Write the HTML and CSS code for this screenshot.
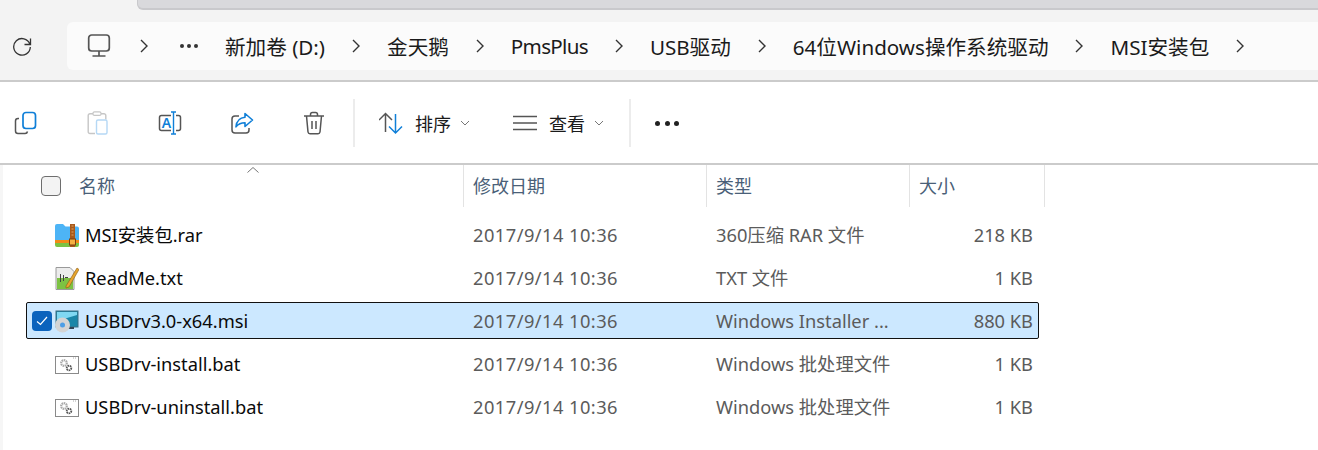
FILE: index.html

```html
<!DOCTYPE html>
<html lang="zh-CN">
<head>
  <meta charset="UTF-8" />
  <title>MSI安装包</title>
  <link rel="stylesheet" href="styles.css">
</head>
<body>
  <div class="top">
    <div class="tabstrip"><div class="tab"></div></div>
    <div class="navbar">
      <svg class="refresh" width="20" height="20" viewBox="0 0 20 20"><path d="M18.500 2.500v6h-6M17.800 8A8.300 8.300 0 1 0 18.300 11" fill="none" stroke="#333" stroke-width="1.300"/></svg>
      <div class="crumbs">
        <svg class="pc" width="24" height="24" viewBox="0 0 24 24"><rect x="1.700" y="1" width="20.600" height="16" rx="3" fill="none" stroke="#555" stroke-width="1.700"/><path d="M12 17v5M5.500 22h13" stroke="#555" stroke-width="1.700"/></svg>
        <svg class="chev" width="8" height="14" viewBox="0 0 8 14"><path d="M1 1l6 6-6 6" fill="none" stroke="#333" stroke-width="1.400"/></svg>
        <div class="more"><i></i><i></i><i></i></div>
        <span>新加卷 (D:)</span>
        <svg class="chev" width="8" height="14" viewBox="0 0 8 14"><path d="M1 1l6 6-6 6" fill="none" stroke="#333" stroke-width="1.400"/></svg>
        <span>金天鹅</span>
        <svg class="chev" width="8" height="14" viewBox="0 0 8 14"><path d="M1 1l6 6-6 6" fill="none" stroke="#333" stroke-width="1.400"/></svg>
        <span class="latin">PmsPlus</span>
        <svg class="chev" width="8" height="14" viewBox="0 0 8 14"><path d="M1 1l6 6-6 6" fill="none" stroke="#333" stroke-width="1.400"/></svg>
        <span>USB驱动</span>
        <svg class="chev" width="8" height="14" viewBox="0 0 8 14"><path d="M1 1l6 6-6 6" fill="none" stroke="#333" stroke-width="1.400"/></svg>
        <span>64位Windows操作系统驱动</span>
        <svg class="chev" width="8" height="14" viewBox="0 0 8 14"><path d="M1 1l6 6-6 6" fill="none" stroke="#333" stroke-width="1.400"/></svg>
        <span>MSI安装包</span>
        <svg class="chev" width="8" height="14" viewBox="0 0 8 14"><path d="M1 1l6 6-6 6" fill="none" stroke="#333" stroke-width="1.400"/></svg>
      </div>
    </div>
  </div>

  <div class="toolbar">
    <div class="tools">
      <!-- copy -->
      <svg width="24" height="24" viewBox="0 0 24 24" fill="none"><path d="M5 7.500H4a2.500 2.500 0 0 0-2.500 2.500v10A2.500 2.500 0 0 0 4 22.500h7a2.500 2.500 0 0 0 2.500-2" stroke="#555" stroke-width="1.500"/><rect x="9" y="1.500" width="12.500" height="16" rx="3" stroke="#0f7fd8" stroke-width="1.700"/></svg>
      <!-- paste -->
      <svg width="24" height="24" viewBox="0 0 24 24" fill="none"><path d="M9 22.500H4a1.800 1.800 0 0 1-1.800-1.800V4.500A1.800 1.800 0 0 1 4 2.700h14a1.800 1.800 0 0 1 1.800 1.800v4" stroke="#c6c6c6" stroke-width="1.400"/><rect x="7" y=".8" width="8" height="3.600" rx="1.500" fill="#fff" stroke="#c6c6c6" stroke-width="1.200"/><rect x="10.500" y="9" width="10.500" height="14" rx="1.500" stroke="#b5d8f5" stroke-width="1.400"/></svg>
      <!-- rename -->
      <svg width="24" height="24" viewBox="0 0 24 24" fill="none"><path d="M13 4.500H3.500a2 2 0 0 0-2 2v11a2 2 0 0 0 2 2H13M18 4.500h2.500a2 2 0 0 1 2 2v11a2 2 0 0 1-2 2H18" stroke="#555" stroke-width="1.500"/><path d="M13 1h5M15.500 1v22M13 23h5" stroke="#0f7fd8" stroke-width="1.400"/><text x="8.500" y="17" class="glyph">A</text></svg>
      <!-- share -->
      <svg width="24" height="24" viewBox="0 0 24 24" fill="none"><path d="M9 5H5a3 3 0 0 0-3 3v11a3 3 0 0 0 3 3h11a3 3 0 0 0 3-3v-2" stroke="#555" stroke-width="1.500"/><path d="M15 2.500l7.500 6.500-7.500 6.500v-3.700c-4 0-6.500 1-9 4 .5-5 3.500-9 9-9.500z" stroke="#0f7fd8" stroke-width="1.600" stroke-linejoin="round"/></svg>
      <!-- delete -->
      <svg width="24" height="24" viewBox="0 0 24 24" fill="none"><path d="M2 5h20M8.500 5V3.500A2 2 0 0 1 10.500 1.500h3a2 2 0 0 1 2 2V5M4.500 5l1.500 16a2 2 0 0 0 2 1.700h8a2 2 0 0 0 2-1.700L19.500 5M10 10v8M14 10v8" stroke="#555" stroke-width="1.500"/></svg>
    </div>
    <div class="sep"></div>
    <div class="menus">
      <div class="menu">
        <svg width="24" height="24" viewBox="0 0 24 24" fill="none"><path d="M0 9l6.500-6.500L13 9M6.500 2.500V21" stroke="#555" stroke-width="1.500"/><path d="M10 15.500l6.500 6.500 6.500-6.500M16.500 22V3" stroke="#0f7fd8" stroke-width="1.500"/></svg>
        <span>排序</span>
        <svg class="caret" width="10" height="6" viewBox="0 0 10 6"><path d="M1 1l4 4 4-4" fill="none" stroke="#777" stroke-width="1"/></svg>
      </div>
      <div class="menu">
        <svg width="24" height="24" viewBox="0 0 24 24" fill="none"><path d="M0 5.500h24M0 12h24M0 18.500h24" stroke="#555" stroke-width="1.500"/></svg>
        <span>查看</span>
        <svg class="caret" width="10" height="6" viewBox="0 0 10 6"><path d="M1 1l4 4 4-4" fill="none" stroke="#777" stroke-width="1"/></svg>
      </div>
    </div>
    <div class="sep"></div>
    <div class="dots"><i></i><i></i><i></i></div>
  </div>

  <div class="content">
    <div class="head">
      <div class="hcell hname">
        <span class="check"></span>
        <span class="hlabel">名称</span>
        <svg class="sort" width="12" height="6" viewBox="0 0 12 6"><path d="M.5 5.500L6 .5l5.500 5" fill="none" stroke="#777" stroke-width="1"/></svg>
      </div>
      <div class="hcell hdate"><span class="hlabel">修改日期</span></div>
      <div class="hcell htype"><span class="hlabel">类型</span></div>
      <div class="hcell hsize"><span class="hlabel">大小</span></div>
    </div>

    <div class="list">
      <div class="row">
        <span class="tick"></span>
        <svg class="ficon" width="24" height="24" viewBox="0 0 24 24"><path d="M0 3a2 2 0 0 1 2-2h6l2.500 2.500H22a2 2 0 0 1 2 2V18H0z" fill="#4db4f6"/><rect y="17" width="24" height="3" fill="#f28a16"/><path d="M0 20h24v2a2 2 0 0 1-2 2H2a2 2 0 0 1-2-2z" fill="#7cc243"/><rect x="15" y="1" width="5" height="23" fill="#a8591b"/><path d="M16.500 3h2M16.500 6h2M16.500 9h2M16.500 12h2" stroke="#e2a560" stroke-width="1"/><rect x="14.500" y="16" width="6" height="6" fill="#f5b041" stroke="#7a3f10"/></svg>
        <span class="fname">MSI安装包.rar</span>
        <span class="fdate">2017/9/14 10:36</span>
        <span class="ftype">360压缩 RAR 文件</span>
        <span class="fsize">218 KB</span>
      </div>
      <div class="row">
        <span class="tick"></span>
        <svg class="ficon" width="24" height="24" viewBox="0 0 24 24"><path d="M1 1.500h14l4 4v18H1z" fill="#ececec" stroke="#9a9a9a"/><path d="M2 12h16v11H2z" fill="#7cc243"/><path d="M5 8h1v8H5zM8 9h1v6H8zM10 11h3v1h-3z" fill="#444"/><path d="M11 20L22 2l2 1.500L14 21l-3 1z" fill="#e6a42c" stroke="#8a5a14" stroke-width=".6"/></svg>
        <span class="fname">ReadMe.txt</span>
        <span class="fdate">2017/9/14 10:36</span>
        <span class="ftype">TXT 文件</span>
        <span class="fsize">1 KB</span>
      </div>
      <div class="row selected">
        <span class="tick on"><svg width="12" height="10" viewBox="0 0 12 10"><path d="M1 5.500l3.500 3L11 1" fill="none" stroke="#fff" stroke-width="1.200"/></svg></span>
        <svg class="ficon" width="24" height="24" viewBox="0 0 24 24"><rect x="1" y="2" width="22" height="16" fill="#1a86a8" stroke="#3b6c80"/><path d="M2 3h20v3L2 12z" fill="#7fd8f2"/><path d="M11 18h8v2h-8z" fill="#345"/><circle cx="7.500" cy="16" r="7.500" fill="#d4d4d4"/><circle cx="7.500" cy="16" r="2.500" fill="#4d9ee6"/></svg>
        <span class="fname">USBDrv3.0-x64.msi</span>
        <span class="fdate">2017/9/14 10:36</span>
        <span class="ftype">Windows Installer ...</span>
        <span class="fsize">880 KB</span>
      </div>
      <div class="row">
        <span class="tick"></span>
        <svg class="ficon" width="24" height="24" viewBox="0 0 24 24"><rect x=".5" y="4.500" width="23" height="17" fill="#fff" stroke="#8a8a8a"/><path d="M18 6h4" stroke="#aaa" stroke-dasharray="1 1"/><circle cx="9" cy="11" r="2.800" fill="none" stroke="#a9a9a9" stroke-width="2.200" stroke-dasharray="1.500 .6"/><circle cx="14" cy="16" r="2.300" fill="none" stroke="#555" stroke-width="1.800" stroke-dasharray="1.500 .6"/></svg>
        <span class="fname">USBDrv-install.bat</span>
        <span class="fdate">2017/9/14 10:36</span>
        <span class="ftype">Windows 批处理文件</span>
        <span class="fsize">1 KB</span>
      </div>
      <div class="row">
        <span class="tick"></span>
        <svg class="ficon" width="24" height="24" viewBox="0 0 24 24"><rect x=".5" y="4.500" width="23" height="17" fill="#fff" stroke="#8a8a8a"/><path d="M18 6h4" stroke="#aaa" stroke-dasharray="1 1"/><circle cx="9" cy="11" r="2.800" fill="none" stroke="#a9a9a9" stroke-width="2.200" stroke-dasharray="1.500 .6"/><circle cx="14" cy="16" r="2.300" fill="none" stroke="#555" stroke-width="1.800" stroke-dasharray="1.500 .6"/></svg>
        <span class="fname">USBDrv-uninstall.bat</span>
        <span class="fdate">2017/9/14 10:36</span>
        <span class="ftype">Windows 批处理文件</span>
        <span class="fsize">1 KB</span>
      </div>
    </div>
  </div>
</body>
</html>
```

FILE: styles.css

```css
* {
  box-sizing: border-box;
}
html, body {
  height: 100%;
}
body {
  margin: 0;
  height: 450px;
  overflow: hidden;
  background: #fff;
  color: #1a1a1a;
  font-family: "Noto Sans", "Noto Sans CJK SC", sans-serif;
  font-size: 18.3px;
}
svg {
  display: block;
  flex: none;
}

/* title area */
.top {
  height: 82px;
  background: #f3f3f3;
  border-bottom: 2px solid #cbcbcb;
}
.tabstrip {
  height: 22px;
  padding-left: 137px;
}
.tab {
  height: 10px;
  background: #d9d9dc;
  border-bottom: 2px solid #c9c9cc;
  border-left: 1px solid #c9c9cc;
  border-bottom-left-radius: 6px;
}
.navbar {
  display: flex;
  align-items: center;
  height: 48px;
}
.refresh {
  margin-left: 12px;
  margin-right: 35px;
}
.crumbs {
  flex: 1;
  height: 48px;
  display: flex;
  align-items: center;
  gap: 27px;
  padding-left: 20px;
  background: #fbfbfb;
  border-radius: 6px 0 0 6px;
  white-space: nowrap;
  font-size: 20.6px;
}
.crumbs .latin {
  letter-spacing: -0.7px;
}
.crumbs .pc {
  margin-right: 2px;
}
.more {
  display: flex;
  gap: 3px;
  margin-left: 5px;
}
.more i {
  width: 4px;
  height: 4px;
  border-radius: 50%;
  background: #333;
}

/* command bar */
.toolbar {
  height: 83px;
  display: flex;
  align-items: center;
  border-bottom: 2px solid #cbcbcb;
}
.tools {
  display: flex;
  gap: 48px;
  padding-left: 14px;
  width: 353px;
}
.glyph {
  font-size: 14px;
  font-weight: 600;
  fill: #0f7fd8;
  text-anchor: middle;
}
.sep {
  width: 2px;
  height: 48px;
  background: #ececec;
}
.menus {
  display: flex;
  width: 274px;
  padding-left: 24px;
  gap: 43px;
}
.menu {
  display: flex;
  align-items: center;
  gap: 12px;
  color: #1a1a1a;
  font-size: 18px;
}
.caret {
  margin-left: -3px;
}
.dots {
  display: flex;
  gap: 4.500px;
  margin: 2px 0 0 24px;
}
.dots i {
  width: 5px;
  height: 5px;
  border-radius: 50%;
  background: #222;
}

/* file list */
.content {
  height: 285px;
  border-left: 3px solid #f6f6f6;
}
.head {
  position: relative;
  display: flex;
  height: 42px;
  color: #4a5f78;
  font-size: 18px;
}
.hcell {
  display: flex;
  align-items: center;
  padding-left: 9px;
  border-right: 1px solid #e3e3e3;
}
.hlabel {
  margin-top: -2px;
}
.hname {
  width: 461px;
  padding-left: 38px;
  gap: 18px;
}
.hdate {
  width: 243px;
}
.htype {
  width: 203px;
}
.hsize {
  width: 135px;
}
.check {
  width: 20px;
  height: 20px;
  background: #f3f3f3;
  border: 1px solid #6e6e6e;
  border-radius: 4px;
}
.sort {
  position: absolute;
  left: 244px;
  top: 2px;
}
.list {
  padding: 9px 0 0 23px;
}
.row {
  display: flex;
  align-items: center;
  width: 1013px;
  height: 37px;
  margin-bottom: 6px;
  padding-left: 5px;
  border: 1px solid transparent;
  color: #5b5b5b;
}
.row span:not(.tick) {
  margin-top: -1px;
}
.row.selected {
  background: #cce8ff;
  border-color: #111;
  border-radius: 2px;
}
.tick {
  width: 20px;
  height: 20px;
  margin-right: 3px;
  flex: none;
}
.tick.on {
  display: flex;
  align-items: center;
  justify-content: center;
  background: #0b63bd;
  border-radius: 4px;
}
.fname {
  width: 388px;
  margin-left: 6px;
  color: #0a0a0a;
}
.fdate {
  width: 243px;
  letter-spacing: 0.45px;
}
.ftype {
  width: 203px;
}
.fsize {
  width: 114px;
  text-align: right;
}
```
